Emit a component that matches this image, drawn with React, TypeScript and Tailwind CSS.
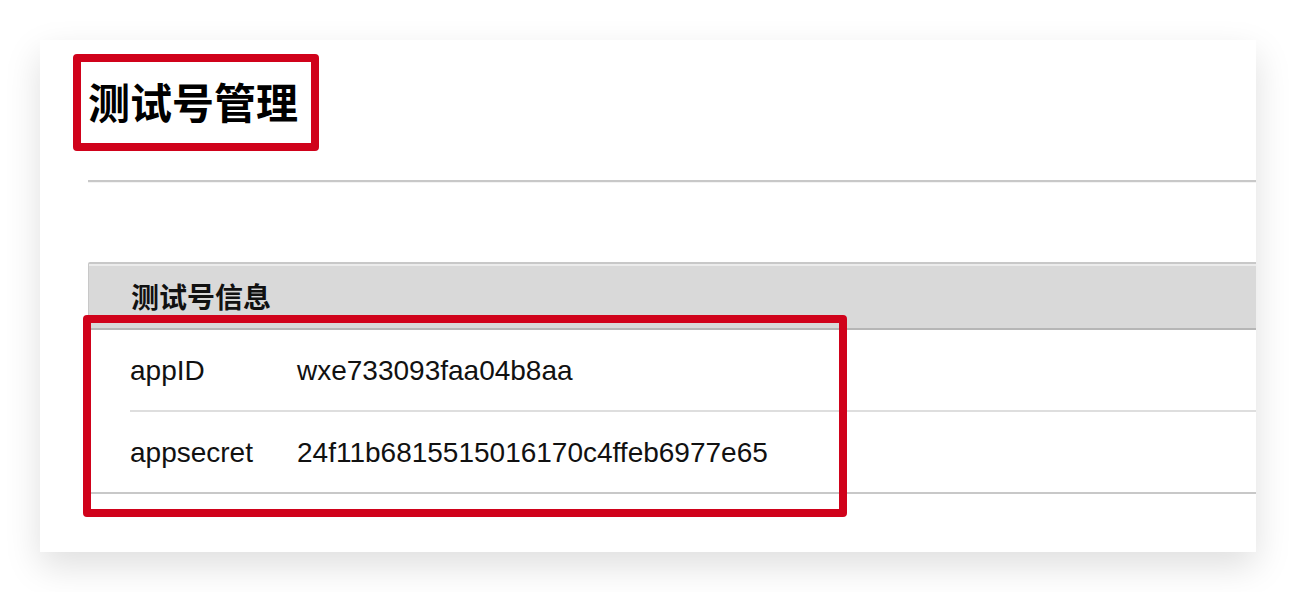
import React from "react";

const cjk = "font-['Noto_Sans_CJK_SC',_'Noto_Sans',_sans-serif]";
const latin = "font-['Liberation_Sans',_'Noto_Sans_CJK_SC',_sans-serif]";

export default function App() {
  return (
    <div className="w-[1296px] h-[592px] bg-white overflow-hidden pt-[40px] pl-[40px]">
      <div className="relative w-[1216px] h-[512px] bg-white shadow-[0_14px_34px_rgba(0,0,0,0.13)] pl-[48px] pt-[40px]">
        {/* title */}
        <h1 className={`${cjk} text-[42px] leading-[42px] font-semibold text-black`}>
          测试号管理
        </h1>
        <div className="mt-[58px] h-[2px] bg-[#c8c8c8]" />
        <div className="h-[1px] bg-[#f3f3f3]" />

        {/* table */}
        <div className="mt-[79px] border-t-2 border-l border-[#c8c8c8] rounded-tl-[2px]">
          <div className="border-t-2 border-[#ececec] bg-[#d9d9d9] h-[64px] pb-[3px] flex items-center pl-[42px]">
            <span className={`${cjk} text-[28px] font-semibold text-[#111]`}>测试号信息</span>
          </div>
          <div className="h-[2px] bg-[#b6b6b6]" />
        </div>
        <div className={`${latin} text-[28px] text-[#111]`}>
          <div className="pl-[42px]">
            <div className="h-[82px] pt-[2px] flex items-center border-b-2 border-[#dedede]">
              <span className="w-[167px]">appID</span>
              <span>wxe733093faa04b8aa</span>
            </div>
          </div>
          <div className="pl-[42px] border-b-2 border-[#c8c8c8]">
            <div className="h-[80px] pt-[2px] flex items-center">
              <span className="w-[167px]">appsecret</span>
              <span>24f11b6815515016170c4ffeb6977e65</span>
            </div>
          </div>
        </div>

        {/* red annotation boxes */}
        <div className="absolute left-[33px] top-[14px] w-[246px] h-[97px] border-[8px] border-[#d0021b] rounded-[4px]" />
        <div className="absolute left-[43px] top-[275px] w-[764px] h-[202px] border-[8px] border-[#d0021b] rounded-[4px]" />
      </div>
    </div>
  );
}
